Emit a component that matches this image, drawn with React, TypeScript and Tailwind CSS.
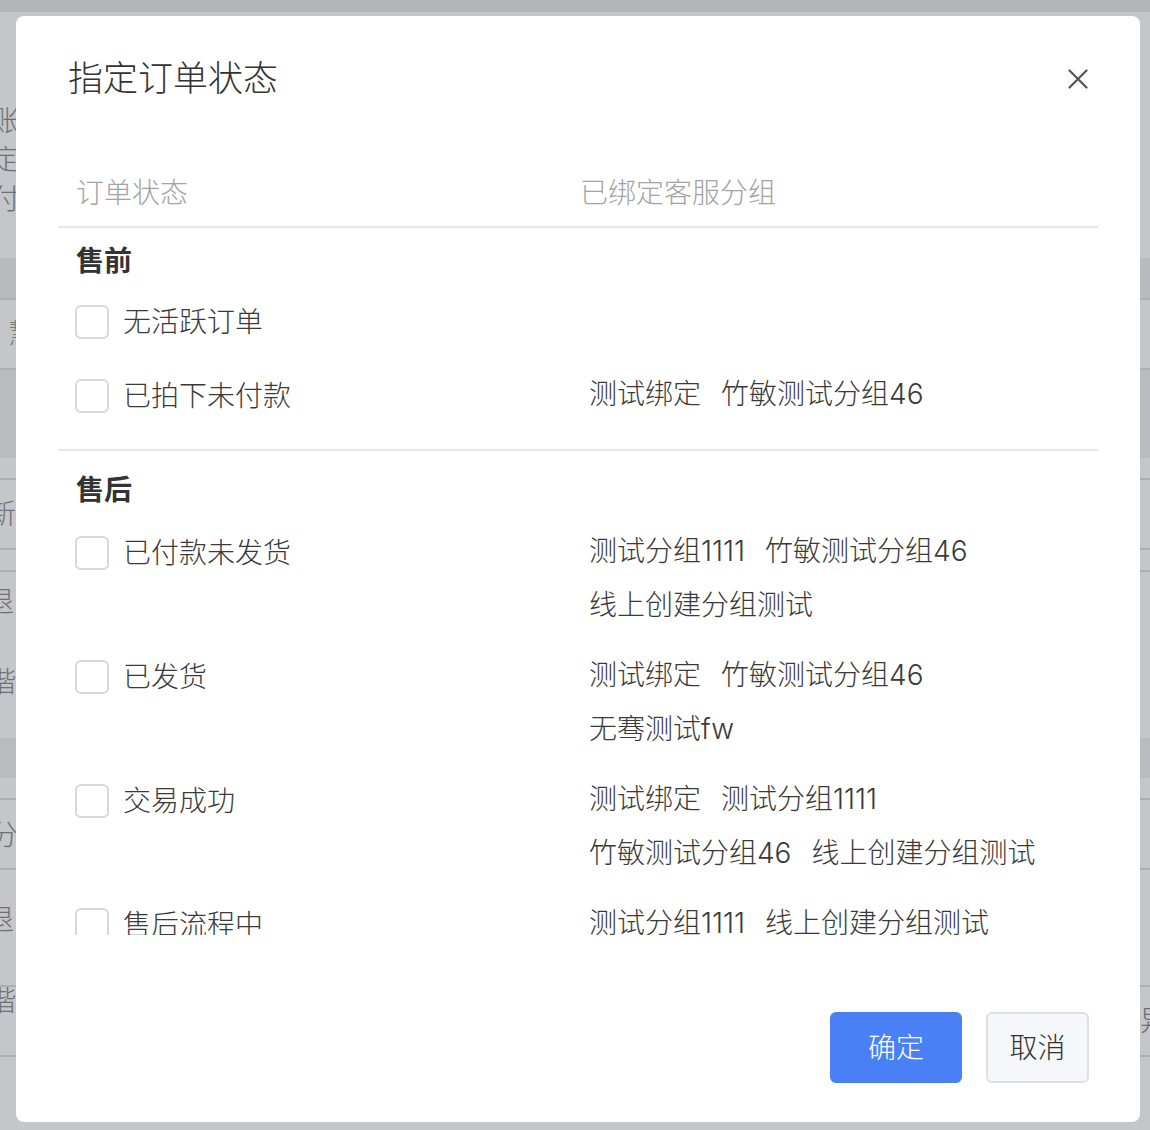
import React from "react";

type Row = { label: string; groups: string[][] };
type Section = { title: string; rows: Row[] };

const sections: Section[] = [
  {
    title: "售前",
    rows: [
      { label: "无活跃订单", groups: [] },
      { label: "已拍下未付款", groups: [["测试绑定", "竹敏测试分组46"]] },
    ],
  },
  {
    title: "售后",
    rows: [
      {
        label: "已付款未发货",
        groups: [["测试分组1111", "竹敏测试分组46"], ["线上创建分组测试"]],
      },
      { label: "已发货", groups: [["测试绑定", "竹敏测试分组46"], ["无骞测试fw"]] },
      {
        label: "交易成功",
        groups: [["测试绑定", "测试分组1111"], ["竹敏测试分组46", "线上创建分组测试"]],
      },
      { label: "售后流程中", groups: [["测试分组1111", "线上创建分组测试"]] },
    ],
  },
];

function Checkbox() {
  return <span className="block h-[34px] w-[34px] shrink-0 rounded-[6px] border-2 border-[#d6d8dc] bg-white" />;
}

function Backdrop() {
  // page behind the overlay, only its edges are visible
  return (
    <div className="text-[28px] leading-[40px] text-[#6e7073]">
      <div className="h-[12px] bg-[#b3b5b8]" />
      <div className="h-[90px]" />
      <div className="ml-[-8px] leading-[39px]">
        <div>账</div>
        <div>定</div>
        <div>付</div>
      </div>
      <div className="h-[39px]" />
      <div className="h-[40px] bg-[#b8babd]" />
      <div className="h-[70px] border-t-2 border-[#adafb2] pl-[8px] pt-[14px] text-[#7a7c7f]">慧</div>
      <div className="h-[90px] border-t-2 border-[#adafb2] bg-[#b9bbbe]" />
      <div className="h-[20px]" />
      <div className="flex h-[70px] items-center justify-between border-t-2 border-[#adafb2]">
        <span className="ml-[-12px]">新</span>
      </div>
      <div className="h-[22px] border-t-2 border-[#adafb2]" />
      <div className="h-[168px] border-t-2 border-[#adafb2] pt-[10px]">
        <div className="ml-[-14px]">退</div>
        <div className="ml-[-12px] mt-[40px]">階</div>
      </div>
      <div className="h-[40px] bg-[#b9bbbe]" />
      <div className="h-[20px]" />
      <div className="h-[70px] border-t-2 border-[#adafb2] pt-[15px]">
        <span className="ml-[-10px]">分</span>
      </div>
      <div className="h-[117px] border-t-2 border-[#adafb2] pt-[30px]">
        <div className="ml-[-14px]">退</div>
      </div>
      <div className="flex h-[70px] justify-between border-t-2 border-[#adafb2]">
        <span className="ml-[-12px] mt-[-6px]">階</span>
        <span className="mr-[-18px] mt-[14px]">异</span>
      </div>
      <div className="border-t-2 border-[#adafb2]" />
    </div>
  );
}

export default function App() {
  return (
    <div
      className="relative h-[1130px] w-full overflow-hidden bg-[#c4c6c9] font-light"
      style={{ fontFamily: 'Inter, "Noto Sans CJK SC", sans-serif' }}
    >
      <Backdrop />

      <div className="absolute left-[16px] top-[16px] flex w-[1124px] flex-col rounded-[8px] bg-white px-[42px] pb-[39px] pt-[40px]">
        <div className="flex h-[44px] items-center justify-between">
          <h2 className="pl-[10px] text-[35px] font-light leading-[44px] text-[#333]">指定订单状态</h2>
          <button className="mr-[10px] mt-[2px] flex h-[20px] w-[20px] items-center justify-center">
            <svg width="20" height="20" viewBox="0 0 20 20" fill="none" stroke="#555" strokeWidth="2.2" strokeLinecap="round">
              <path d="M1.5 1.5 L18.5 18.5 M18.5 1.5 L1.5 18.5" />
            </svg>
          </button>
        </div>

        <div className="mt-[60px] h-[775px] overflow-hidden">
          <div className="flex h-[68px] items-center border-b-2 border-[#e6e7eb] text-[28px] text-[#a3a3a3]">
            <div className="w-[522px] pl-[18px]">订单状态</div>
            <div>已绑定客服分组</div>
          </div>

          {sections.map((section, si) => (
            <div
              key={section.title}
              className={
                si === 0
                  ? "border-b-2 border-[#e6e7eb] pb-[16px] pt-[13px]"
                  : "pt-[19px]"
              }
            >
              <div className="h-[40px] pl-[18px] text-[28px] font-bold leading-[40px] text-[#333]">
                {section.title}
              </div>
              <div className={si === 0 ? "mt-[4px]" : "mt-[6px]"}>
                {section.rows.map((row) => (
                  <div key={row.label} className="flex py-[15px] text-[28px] text-[#3a3a3a]">
                    <div className="flex h-[44px] w-[522px] shrink-0 items-center pl-[17px]">
                      <Checkbox />
                      <span className="ml-[14px] leading-[40px]">{row.label}</span>
                    </div>
                    <div className="flex flex-col gap-[14px] pl-[9px]">
                      {row.groups.map((line, li) => (
                        <div key={li} className="flex h-[40px] items-center">
                          {line.map((g) => (
                            <span key={g} className="mr-[20px] leading-[40px]">
                              {g}
                            </span>
                          ))}
                        </div>
                      ))}
                    </div>
                  </div>
                ))}
              </div>
            </div>
          ))}
        </div>

        <div className="mt-[77px] flex justify-end gap-[24px] pr-[9px]">
          <button className="flex h-[71px] w-[132px] items-center justify-center rounded-[6px] bg-[#4a80f6] text-[28px] text-white">
            确定
          </button>
          <button className="flex h-[71px] w-[103px] items-center justify-center rounded-[6px] border-2 border-[#dcdfe5] bg-[#f5f7fa] text-[28px] text-[#333]">
            取消
          </button>
        </div>
      </div>
    </div>
  );
}
